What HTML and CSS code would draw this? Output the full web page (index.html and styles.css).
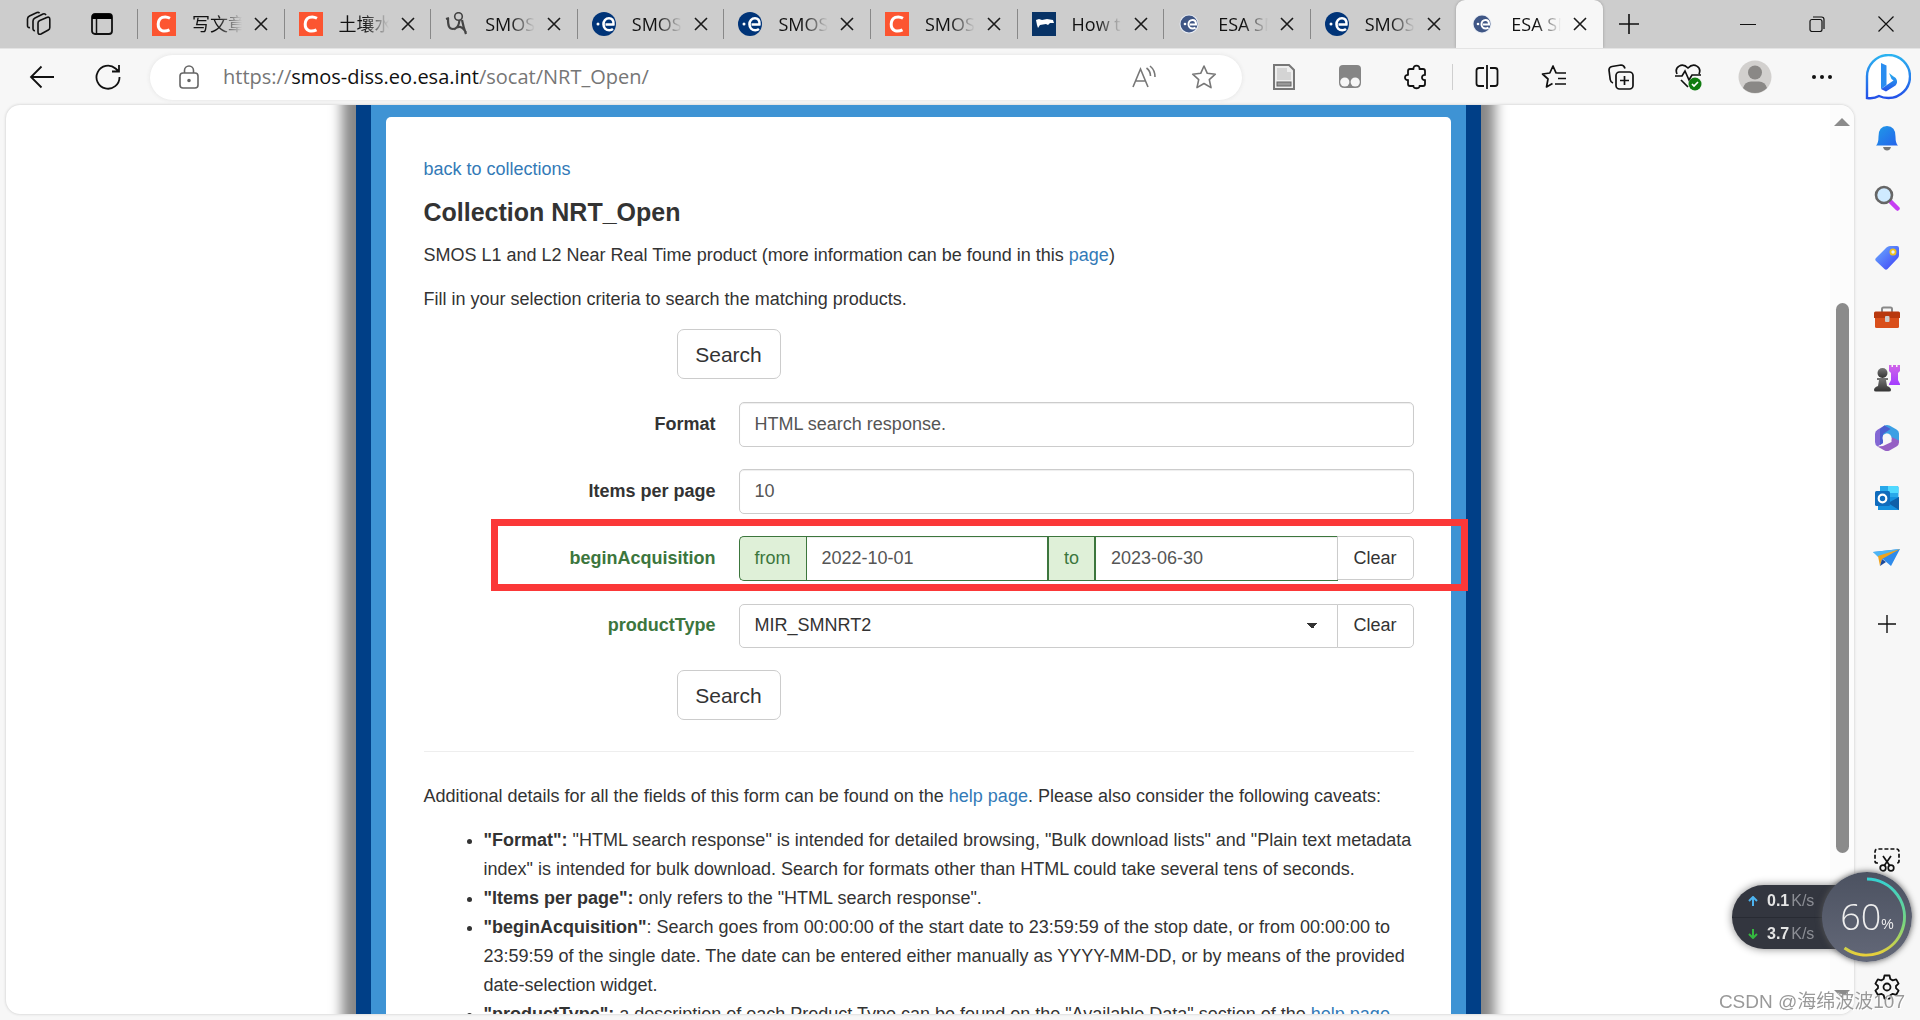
FILE: index.html
```html
<!DOCTYPE html>
<html lang="en">
<head>
<meta charset="utf-8">
<title>ESA SMOS Online Dissemination</title>
<link rel="stylesheet" href="styles.css">
</head>
<body>
<svg class="defs" width="0" height="0" aria-hidden="true">
  <defs>
    <linearGradient id="gBlue" x1="0" y1="0" x2="1" y2="1"><stop offset="0" stop-color="#1f9be8"/><stop offset="1" stop-color="#2563eb"/></linearGradient>
    <linearGradient id="gTag" x1="0" y1="0" x2="1" y2="1"><stop offset="0" stop-color="#6cb0ff"/><stop offset="1" stop-color="#3d3df5"/></linearGradient>
    <linearGradient id="gBing" x1="0" y1="0" x2="0" y2="1"><stop offset="0" stop-color="#2bb3f0"/><stop offset="1" stop-color="#2350e8"/></linearGradient>
    <linearGradient id="gRook" x1="0" y1="0" x2="0" y2="1"><stop offset="0" stop-color="#d065e8"/><stop offset="1" stop-color="#a33cff"/></linearGradient>
    <linearGradient id="gPawn" x1="0" y1="0" x2="0" y2="1"><stop offset="0" stop-color="#777"/><stop offset="1" stop-color="#333"/></linearGradient>
    <linearGradient id="gArc" x1="0" y1="0" x2="0" y2="1"><stop offset="0" stop-color="#35d0d0"/><stop offset="0.6" stop-color="#7cd67c"/><stop offset="1" stop-color="#e8cf3a"/></linearGradient>
    <symbol id="close" viewBox="0 0 14 14"><path d="M1 1l12 12M13 1L1 13" fill="none" stroke="#1a1a1a" stroke-width="1.6"/></symbol>
    <symbol id="csdn" viewBox="0 0 24 24"><path d="M0 0h24v24H0z" fill="#fc5531"/><path d="M18 6.200C13 3.500 6.500 5 6.200 12c-.2 7 6 8.500 11.300 5.800" fill="none" stroke="#fff" stroke-width="3"/></symbol>
    <symbol id="esa" viewBox="0 0 24 24"><circle cx="12" cy="12" r="12" fill="#003478"/><circle cx="6" cy="12" r="1.500" fill="#fff"/><path d="M22.500 12.500H13.500M21.500 12.500C22 8 19.500 6.200 17 6.200c-3.400 0-5.500 2.800-5.500 6 0 3.500 2.500 6 5.800 6 1.400 0 2.700-.4 3.700-1.200" fill="none" stroke="#fff" stroke-width="2.600"/></symbol>
    <symbol id="esaSmall" viewBox="0 0 24 24"><circle cx="11" cy="12" r="9.500" fill="#e9edf4"/><circle cx="11" cy="12" r="8.500" fill="#3f5685"/><circle cx="7" cy="12" r="1.300" fill="#fff"/><path d="M19 12.500H12M18 12c0-3-1.500-4-3.500-4-2.400 0-4 2-4 4.200 0 2.500 1.800 4.300 4.200 4.300 1 0 2-.3 2.800-.9" fill="none" stroke="#fff" stroke-width="2"/></symbol>
  </defs>
</svg>

<header class="tabbar">
  <div class="tab-tools">
    <button class="icon-btn" aria-label="Workspaces"><svg width="26" height="26" viewBox="0 0 26 26" fill="none" stroke="#111" stroke-width="1.600" stroke-linejoin="round"><path d="M12 12q0-1.800 1.800-2.600l7-3q3-1 3 2v8q0 1.800-1.500 2.600l-7.300 4q-3 1-3-2z"/><path d="M9 19.500q-2 .5-2-2V10q0-2 2-3l8-4q2-.8 3 1"/><path d="M4 16.500q-2.500.5-2.500-2V8q0-2 2-3L11 1.500q2-.6 2.500.8"/></svg></button>
    <button class="icon-btn" aria-label="Tab actions"><svg width="22" height="22" viewBox="0 0 22 22"><rect x="1" y="1" width="20" height="20" rx="3" fill="none" stroke="#111" stroke-width="1.800"/><path d="M1 3q0-2 3-2h14q3 0 3 2v3H1z" fill="#000"/><path d="M5.500 6v15" stroke="#111" stroke-width="1.500"/></svg></button>
  </div>
  <nav class="tabs" aria-label="Tabs">
    <div class="tab"><svg class="fav"><use href="#csdn"/></svg><span class="tab-title">写文章</span><button class="tab-close" aria-label="Close tab"><svg width="14" height="14"><use href="#close"/></svg></button></div>
    <div class="tab"><svg class="fav"><use href="#csdn"/></svg><span class="tab-title">土壤水</span><button class="tab-close" aria-label="Close tab"><svg width="14" height="14"><use href="#close"/></svg></button></div>
    <div class="tab"><svg class="fav" viewBox="0 0 24 24" fill="none" stroke="#444"><circle cx="13.500" cy="4.500" r="3.800" stroke-width="1.600"/><path d="M3 7c0 7 1 10 5 10 4 0 6-4 6.500-9M17 8c1 5 2 9 4 14M9 17.500c4-4 8-4 12 3" stroke-width="2.200"/><path d="M1 7l3-1" stroke-width="2"/></svg><span class="tab-title">SMOS</span><button class="tab-close" aria-label="Close tab"><svg width="14" height="14"><use href="#close"/></svg></button></div>
    <div class="tab"><svg class="fav"><use href="#esa"/></svg><span class="tab-title">SMOS</span><button class="tab-close" aria-label="Close tab"><svg width="14" height="14"><use href="#close"/></svg></button></div>
    <div class="tab"><svg class="fav"><use href="#esa"/></svg><span class="tab-title">SMOS</span><button class="tab-close" aria-label="Close tab"><svg width="14" height="14"><use href="#close"/></svg></button></div>
    <div class="tab"><svg class="fav"><use href="#csdn"/></svg><span class="tab-title">SMOS</span><button class="tab-close" aria-label="Close tab"><svg width="14" height="14"><use href="#close"/></svg></button></div>
    <div class="tab"><svg class="fav" viewBox="0 0 24 24"><path d="M0 0h24v24H0z" fill="#083366"/><path d="M4 8l3-1 3 1 5-1 6 1 1 3-4 0-2 2-2-1-6 1-2 3-1-3z" fill="#fff"/></svg><span class="tab-title">How t</span><button class="tab-close" aria-label="Close tab"><svg width="14" height="14"><use href="#close"/></svg></button></div>
    <div class="tab"><svg class="fav"><use href="#esaSmall"/></svg><span class="tab-title">ESA SM</span><button class="tab-close" aria-label="Close tab"><svg width="14" height="14"><use href="#close"/></svg></button></div>
    <div class="tab"><svg class="fav"><use href="#esa"/></svg><span class="tab-title">SMOS</span><button class="tab-close" aria-label="Close tab"><svg width="14" height="14"><use href="#close"/></svg></button></div>
    <div class="tab active"><svg class="fav"><use href="#esaSmall"/></svg><span class="tab-title">ESA SM</span><button class="tab-close" aria-label="Close tab"><svg width="14" height="14"><use href="#close"/></svg></button></div>
    <button class="icon-btn new-tab" aria-label="New tab"><svg width="22" height="22" viewBox="0 0 22 22"><path d="M11 1v20M1 11h20" stroke="#111" stroke-width="1.600"/></svg></button>
  </nav>
  <div class="window-buttons">
    <button class="icon-btn" aria-label="Minimize"><svg width="16" height="16" viewBox="0 0 16 16"><path d="M0 8.500h16" stroke="#111"/></svg></button>
    <button class="icon-btn" aria-label="Restore"><svg width="16" height="16" viewBox="0 0 16 16" fill="none" stroke="#111" stroke-width="1.200"><rect x="1" y="3.500" width="12" height="12" rx="2"/><path d="M4 1h8.500Q15 1 15 3.500V13"/></svg></button>
    <button class="icon-btn" aria-label="Close window"><svg width="16" height="16" viewBox="0 0 16 16"><path d="M.5.500l15 15M15.500.500l-15 15" stroke="#111" stroke-width="1.200"/></svg></button>
  </div>
</header>

<div class="toolbar">
  <div class="nav-buttons">
    <button class="icon-btn" aria-label="Back"><svg width="26" height="24" viewBox="0 0 26 24" fill="none" stroke="#111" stroke-width="1.800"><path d="M12.500 1.500L2 12l10.500 10.500M2 12h23"/></svg></button>
    <button class="icon-btn" aria-label="Refresh"><svg width="26" height="26" viewBox="0 0 26 26" fill="none" stroke="#111" stroke-width="1.800"><path d="M24.500 13A11.500 11.500 0 1 1 20.500 4.500L23.500 7M24 1v6.500h-7"/></svg></button>
  </div>
  <div class="address">
    <svg width="20" height="24" viewBox="0 0 20 24" fill="none" stroke="#666" stroke-width="1.600"><rect x="1" y="8" width="18" height="15" rx="3"/><path d="M5.500 8V5.500a4.500 4.500 0 0 1 9 0V8"/><circle cx="10" cy="15.500" r="1" fill="#555"/></svg>
    <span class="url">https://<span class="host">smos-diss.eo.esa.int</span>/socat/NRT_Open/</span>
    <button class="icon-btn addr-btn" aria-label="Read aloud"><svg width="24" height="24" viewBox="0 0 24 24" fill="none" stroke="#777" stroke-width="1.600"><path d="M1 22L8.500 4 16 22M4 16h9.500M14.500 3q4 3 4 8M18 1q5 4 5 11"/></svg></button>
    <button class="icon-btn addr-btn" aria-label="Add to favorites"><svg width="26" height="26" viewBox="0 0 26 26" fill="none" stroke="#777" stroke-width="1.600" stroke-linejoin="round"><path d="M13 2l3.300 7.300 8 .9-6 5.400 1.700 8L13 19.500 6 23.600l1.700-8-6-5.400 8-.9z"/></svg></button>
  </div>
  <div class="extensions">
    <button class="icon-btn" aria-label="Page extension"><svg width="22" height="26" viewBox="0 0 22 26"><path d="M1 1h15l5 5v19H1z" fill="#eee" stroke="#777" stroke-width="2"/><path d="M4 4h10v4h4v8H4z" fill="#d4d4d4"/><rect x="4" y="18" width="14" height="4" fill="#999" stroke="#666"/></svg></button>
    <button class="icon-btn" aria-label="Script manager"><svg width="24" height="24" viewBox="0 0 24 24"><path d="M5 0h14q4 0 4 4v14q0 5-5.500 5h-11Q1 23 1 18V4q0-4 4-4z" fill="#858585"/><circle cx="6.800" cy="17" r="4.600" fill="#f7f7f7"/><circle cx="17.200" cy="17" r="4.600" fill="#f7f7f7"/></svg></button>
    <button class="icon-btn" aria-label="Extensions"><svg width="24" height="26" viewBox="0 0 24 26" fill="none" stroke="#111" stroke-width="1.800" stroke-linejoin="round"><path d="M6 5h3.500C9 .500 16 .500 15.500 5H19q2 0 2 2v4c-4-.5-4 5.500 0 5v4q0 2-2 2h-3.500c.5 3-6.500 3-6 0H6q-2 0-2-2v-4c-4 .5-4-5.500 0-5V7q0-2 2-2z"/></svg></button>
  </div>
  <div class="browser-tools">
    <button class="icon-btn" aria-label="Split screen"><svg width="24" height="24" viewBox="0 0 24 24" fill="none" stroke="#111" stroke-width="1.800"><path d="M9 3H4Q1.500 3 1.500 5.500v13Q1.500 21 4 21h5M15 3h5q2.500 0 2.500 2.500v13Q22.500 21 20 21h-5M12 0v24"/></svg></button>
    <button class="icon-btn" aria-label="Favorites"><svg width="26" height="26" viewBox="0 0 26 26" fill="none" stroke="#111" stroke-width="1.700" stroke-linejoin="round"><path d="M16 9l-1-.2L12 2 8.800 9l-7.300 1 5.500 5-1.500 8 6-3.500M16 9h9M17 14.500h8M14 20h11"/></svg></button>
    <button class="icon-btn" aria-label="Collections"><svg width="26" height="26" viewBox="0 0 26 26" fill="none" stroke="#111" stroke-width="1.700"><rect x="8" y="8" width="17" height="17" rx="3.500"/><path d="M16.500 12v9M12 16.500h9M5 19Q2.500 18 2.200 15.500L1 6Q1 3 4 2.500L13 1q3 0 4 3.500"/></svg></button>
    <button class="icon-btn" aria-label="Browser essentials"><svg width="28" height="28" viewBox="0 0 28 28" fill="none" stroke="#111" stroke-width="1.700"><path d="M3 11C0 4 8-1 14 5c6-6 14-1 11 6M1 13h7l3-5 4 9 3-5h9M7 17l7 7"/><circle cx="21" cy="21" r="6.500" fill="#107c10" stroke="none"/><path d="M18 21l2 2 4-4" stroke="#fff"/></svg></button>
    <button class="icon-btn" aria-label="Profile"><svg width="34" height="34" viewBox="0 0 34 34"><circle cx="17" cy="17" r="16.500" fill="#d2d0ce"/><circle cx="17" cy="12.500" r="7" fill="#8a8886"/><path d="M5 28q2-6.500 8-6.500h8q6 0 8 6.500-5 5-12 5T5 28z" fill="#8a8886"/></svg></button>
    <button class="icon-btn" aria-label="Settings and more"><svg width="22" height="6" viewBox="0 0 22 6" fill="#111"><circle cx="3" cy="3" r="2"/><circle cx="11" cy="3" r="2"/><circle cx="19" cy="3" r="2"/></svg></button>
  </div>
  <button class="icon-btn bing" aria-label="Bing chat"><svg width="46" height="46" viewBox="0 0 46 46"><path d="M2 44V23A21.500 21.500 0 1 1 23.500 44Q18 44 14 42 9 45 2 44z" fill="#fff" stroke="url(#gBing)" stroke-width="2.400"/><path d="M16 9l5.500 2.500V31L16 35z" fill="#2a8df0"/><path d="M16 35l5 2.500 9.500-6c3-3 1.500-7.500-2-9L24 19l2.500 6 2 1.500z" fill="url(#gBing)"/></svg></button>
</div>

<div class="workspace">
  <div class="viewport">
    <main class="page">
      <div class="frame">
        <div class="card">
          <p class="back"><a href="#collections">back to collections</a></p>
          <h1>Collection NRT_Open</h1>
          <p>SMOS L1 and L2 Near Real Time product (more information can be found in this <a href="#page">page</a>)</p>
          <p>Fill in your selection criteria to search the matching products.</p>
          <form class="criteria">
            <button type="button" class="btn btn-lg">Search</button>
            <div class="row">
              <label for="format">Format</label>
              <input class="control" id="format" type="text" value="HTML search response.">
            </div>
            <div class="row">
              <label for="items">Items per page</label>
              <input class="control" id="items" type="text" value="10">
            </div>
            <div class="row success">
              <label for="from">beginAcquisition</label>
              <div class="group">
                <span class="addon">from</span>
                <input class="control" id="from" type="text" value="2022-10-01">
                <label class="addon middle" for="to">to</label>
                <input class="control" id="to" type="text" value="2023-06-30">
                <button type="button" class="btn clear">Clear</button>
              </div>
              <div class="marker"></div>
            </div>
            <div class="row success">
              <label for="product">productType</label>
              <div class="group">
                <select class="picker" id="product"><option>MIR_SMNRT2</option></select>
                <button type="button" class="btn clear">Clear</button>
              </div>
            </div>
            <button type="button" class="btn btn-lg">Search</button>
          </form>
          <hr>
          <p>Additional details for all the fields of this form can be found on the <a href="#help">help page</a>. Please also consider the following caveats:</p>
          <ul>
            <li><b>"Format":</b> "HTML search response" is intended for detailed browsing, "Bulk download lists" and "Plain text metadata index" is intended for bulk download. Search for formats other than HTML could take several tens of seconds.</li>
            <li><b>"Items per page":</b> only refers to the "HTML search response".</li>
            <li><b>"beginAcquisition"</b>: Search goes from 00:00:00 of the start date to 23:59:59 of the stop date, or from 00:00:00 to 23:59:59 of the single date. The date can be entered either manually as YYYY-MM-DD, or by means of the provided date-selection widget.</li>
            <li><b>"productType":</b> a description of each Product Type can be found on the "Available Data" section of the <a href="#help">help page</a></li>
          </ul>
        </div>
      </div>
    </main>
    <div class="scrollbar">
      <svg width="16" height="8" viewBox="0 0 16 8"><path d="M8 0l8 8H0z" fill="#8b8b8b"/></svg>
      <div class="track"><div class="thumb"></div></div>
      <svg width="16" height="8" viewBox="0 0 16 8"><path d="M8 8l8-8H0z" fill="#8b8b8b"/></svg>
    </div>
  </div>
  <aside class="sidebar">
    <button class="icon-btn" aria-label="Notifications"><svg width="26" height="26" viewBox="0 0 26 26"><path d="M9 22h8q-1 3.500-4 3.500T9 22z" fill="#777"/><path d="M2 20.500q2.500-2 2.500-9Q4.500 1 13 1t8.500 10.500q0 7 2.500 9z" fill="url(#gBlue)"/></svg></button>
    <button class="icon-btn" aria-label="Search"><svg width="26" height="26" viewBox="0 0 26 26"><path d="M17 17l6.500 6.500" stroke="#c63df2" stroke-width="4.500" stroke-linecap="round"/><circle cx="10" cy="10" r="8" fill="#cfeaff" stroke="#666" stroke-width="2.600"/></svg></button>
    <button class="icon-btn" aria-label="Shopping"><svg width="26" height="26" viewBox="0 0 26 26"><path d="M12.500 2.500Q14 1 16 1h7q2 0 2 2v7q0 2-1.500 3.500L13.500 24q-1.500 1.500-3 0L2 16q-1.500-1.500 0-3z" fill="url(#gTag)"/><circle cx="19" cy="7" r="2.600" fill="#e8f0ff" stroke="#f2c21a" stroke-width="1.800"/></svg></button>
    <button class="icon-btn" aria-label="Tools"><svg width="28" height="26" viewBox="0 0 28 26"><path d="M9 7V4q0-1.500 1.500-1.500h7Q19 2.500 19 4v3" fill="none" stroke="#8a8a8a" stroke-width="2"/><rect x="2" y="11" width="24" height="12" rx="1.500" fill="#d94f1b"/><path d="M1 8q0-1.500 1.500-1.500h23Q27 6.500 27 8v5H1z" fill="#b8380e"/><rect x="12" y="11" width="4.500" height="6" rx="1" fill="#ccc"/></svg></button>
    <button class="icon-btn" aria-label="Games"><svg width="28" height="28" viewBox="0 0 28 28"><path d="M16 1h2.500v2H20V1h3v2h1.500V1H27v6l-2 2v7l2 4v1H16v-1l2-4V9l-2-2z" fill="url(#gRook)"/><circle cx="9.500" cy="9" r="5" fill="url(#gPawn)"/><path d="M4 14h11v2h-2l1 6q4 1.500 4 4 0 1.500-2 1.500H3Q1 27.500 1 26q0-2.500 4-4l1-6H4z" fill="url(#gPawn)"/></svg></button>
    <button class="icon-btn" aria-label="Microsoft 365"><svg width="26" height="28" viewBox="0 0 26 28"><path d="M10.500 1.600q2.500-1.400 5 0l7 4q2.500 1.400 2.500 4v9L17.500 14l-4.500-4.500L8 12z" fill="#3a9fe4"/><path d="M10.500 1.600L3.500 5.700Q1 7 1 10v8q0 3 2.500 4.400L9 19V9.500L16 5z" fill="#8468d4"/><path d="M9 19V10l7.500-5-6-3.400L6 5v16z" fill="#4a5fd0"/><path d="M3.500 22.400l7 4q2.500 1.400 5 0l7-4Q25 21 25 18.500v-2L17.500 13v5L9 22z" fill="#9560c4"/><circle cx="13" cy="14" r="4.500" fill="#f7f7f7"/></svg></button>
    <button class="icon-btn" aria-label="Outlook"><svg width="26" height="26" viewBox="0 0 26 26"><path d="M6 1h17q1.500 0 1.500 1.500V13H6z" fill="#28a8ea"/><path d="M14 1h9q1.500 0 1.500 1.500V8H14z" fill="#50d9ff"/><path d="M4 12h21v13H4z" fill="#1490df"/><path d="M25 12v13L14 18z" fill="#0f5fa8"/><rect x="1" y="6" width="15" height="15" rx="1.500" fill="#0f6cbd"/><circle cx="8.500" cy="13.500" r="3.800" fill="none" stroke="#fff" stroke-width="2.200"/></svg></button>
    <button class="icon-btn" aria-label="Drop"><svg width="28" height="22" viewBox="0 0 28 22"><path d="M0 5l27-3-9 17-7-6z" fill="#2f8bea"/><path d="M0 5l27-3L5 10z" fill="#4db5f5"/><path d="M27 2L5 9l2 10 2-7z" fill="#f0a31c"/><path d="M7 19l2-7 4 3z" fill="#1b4a9c"/></svg></button>
    <button class="icon-btn" aria-label="Customize"><svg width="18" height="18" viewBox="0 0 18 18"><path d="M9 0v18M0 9h18" stroke="#111" stroke-width="1.400"/></svg></button>
    <span class="grow"></span>
    <button class="icon-btn" aria-label="Screenshot"><svg width="26" height="24" viewBox="0 0 26 24" fill="none" stroke="#111" stroke-width="1.700"><path d="M4 15H3q-2 0-2-2V4q0-3 3-3h18q3 0 3 3v9q0 2-2 2h-1" stroke-dasharray="4 2"/><path d="M9 8l7 10M17 8l-7 10"/><circle cx="9" cy="20" r="2.800"/><circle cx="17" cy="20" r="2.800"/></svg></button>
    <button class="icon-btn settings" aria-label="Settings"><svg width="26" height="26" viewBox="0 0 26 26" fill="none" stroke="#111" stroke-width="1.800" stroke-linejoin="round"><path d="M10.500 1.500h5l.8 3.500 2.400 1.400 3.500-1 2.400 4.200-2.600 2.400v2.200l2.600 2.400-2.400 4.200-3.500-1-2.400 1.400-.8 3.300h-5l-.8-3.300-2.400-1.400-3.500 1-2.400-4.200L4 14.200V12L1.400 9.600l2.400-4.200 3.500 1L9.700 5z"/><circle cx="13" cy="13" r="3.500"/></svg></button>
  </aside>
</div>

<div class="monitor">
  <div class="speeds">
    <div class="speed"><svg width="10" height="10" viewBox="0 0 10 10" fill="none" stroke="#4db4f0" stroke-width="2"><path d="M5 10V1M1 5l4-4 4 4"/></svg><b>0.1</b><span>K/s</span></div>
    <div class="speed"><svg width="10" height="10" viewBox="0 0 10 10" fill="none" stroke="#35b840" stroke-width="2"><path d="M5 0v9M1 5l4 4 4-4"/></svg><b>3.7</b><span>K/s</span></div>
  </div>
  <div class="dial">
    <svg class="arc" viewBox="0 0 90 90" fill="none" stroke="url(#gArc)" stroke-width="3"><path d="M45 7a38 38 0 1 1-22.500 69"/></svg>
    <span class="percent">60</span><span class="unit">%</span>
  </div>
</div>
<div class="watermark">CSDN @海绵波波107</div>
</body>
</html>
```
FILE: styles.css
```css
* { box-sizing: border-box; }
body {
  margin: 0;
  height: 100vh;
  display: flex;
  flex-direction: column;
  overflow: hidden;
  background: #f7f7f7;
  color: #333;
  font: 18px/29px "Liberation Sans", Arial, "Noto Sans CJK SC", sans-serif;
}
.defs { position: absolute; }
button, input, select { font: inherit; color: inherit; }
.icon-btn {
  display: flex;
  align-items: center;
  justify-content: center;
  padding: 0;
  border: 0;
  background: none;
}
a { color: #337ab7; text-decoration: none; }

/* tab strip */
.tabbar {
  display: flex;
  flex: none;
  height: 48px;
  background: #cdcdcd;
  font: 18px/24px "Open Sans", "Noto Sans CJK SC", sans-serif;
  color: #111;
}
.tab-tools { display: flex; flex: none; width: 137px; padding-left: 7px; }
.tab-tools .icon-btn { width: 63px; }
.tabs { display: flex; flex: 1; min-width: 0; max-width: 1518px; }
.tab {
  display: flex;
  align-items: center;
  flex: 1 1 0;
  min-width: 0;
  padding-left: 15px;
  background: linear-gradient(#888, #888) left center / 1px 30px no-repeat;
}
.tab.active { background: #f7f7f7; border-radius: 9px 9px 0 0; box-shadow: 0 0 3px #999; clip-path: inset(0 -4px 0 -4px); }
.fav { flex: none; width: 24px; height: 24px; }
.tab-title {
  flex: none;
  width: 50px;
  margin-left: 16px;
  overflow: hidden;
  white-space: nowrap;
  -webkit-mask-image: linear-gradient(90deg, #000 50%, transparent);
  mask-image: linear-gradient(90deg, #000 50%, transparent);
}
.tab-close { display: flex; padding: 0; margin-left: 12px; border: 0; background: none; }
.new-tab { flex: none; width: 52px; }
.window-buttons { display: flex; flex: none; margin-left: auto; }
.window-buttons .icon-btn { width: 69px; }

/* toolbar */
.toolbar {
  display: flex;
  align-items: center;
  flex: none;
  height: 57px;
  border-top: 1px solid #e4e4e4;
}
.nav-buttons { display: flex; flex: none; width: 150px; padding-left: 9px; }
.nav-buttons .icon-btn { width: 66px; }
.address {
  display: flex;
  align-items: center;
  flex: 1;
  height: 45px;
  margin-right: 9px;
  padding: 0 8px 0 29px;
  border-radius: 23px;
  background: #fff;
  box-shadow: 0 0 4px #e2e2e2;
  font: 20px/26px "Open Sans", sans-serif;
}
.url { flex: 1; margin-left: 24px; color: #767676; white-space: nowrap; }
.host { color: #111; }
.addr-btn { width: 60px; }
.extensions, .browser-tools { display: flex; flex: none; }
.extensions .icon-btn { width: 66px; }
.extensions { padding-right: 3px; border-right: 1px solid #cfcfcf; }
.browser-tools .icon-btn { width: 67px; }
.bing { flex: none; width: 65px; }

/* page area and sidebar */
.workspace { display: flex; flex: 1; min-height: 0; }
.viewport {
  display: flex;
  flex: 1;
  min-width: 0;
  margin: 0 0 6px 6px;
  overflow: hidden;
  background: #fff;
  border-radius: 14px;
  box-shadow: 0 0 3px #c4c4c4;
}
.page { flex: 1; min-width: 0; overflow: hidden; }
.frame {
  max-width: 1125px;
  min-height: 100%;
  margin: 0 auto;
  padding: 12px 15px 15px;
  border: solid #003f87;
  border-width: 0 15px;
  background: #3e93d4;
  box-shadow: 0 0 12px 14px #888;
}
.card { padding: 38px 37px 30px 38px; border-radius: 5px; background: #fff; }
.card p { margin: 0 0 15px; }
.card .back { margin: 0; }
h1 { margin: 13px 0 14px; font-size: 25px; line-height: 30px; }
.criteria { display: flex; flex-direction: column; gap: 22px; padding-bottom: 1px; }
.row {
  position: relative;
  display: flex;
  align-items: center;
  gap: 23px;
  min-height: 45px;
}
.btn-lg + .row { margin-top: 1px; }
.row > label { flex: none; width: 292px; text-align: right; font-weight: bold; }
.success > label { color: #3c763d; }
.control {
  flex: 1;
  min-width: 0;
  width: 100%;
  height: 45px;
  padding: 0 15px;
  border: 1px solid #ccc;
  border-radius: 5px;
  background: #fff;
  box-shadow: inset 0 1px 1px #eee;
  color: #555;
}
.btn {
  border: 1px solid #ccc;
  border-radius: 5px;
  background: #fff;
  color: #333;
}
.btn-lg {
  align-self: flex-start;
  width: 104px;
  height: 50px;
  margin-left: 253px;
  padding: 0;
  border-radius: 7px;
  font-size: 21px;
}
.group { display: flex; flex: 1; min-width: 0; }
.success .control { border-color: #3c763d; border-radius: 0; }
.addon {
  flex: none;
  width: 67px;
  border: 1px solid #3c763d;
  border-right: 0;
  border-radius: 5px 0 0 5px;
  background: #dff0d8;
  color: #3c763d;
  line-height: 43px;
  text-align: center;
}
.middle { width: 47px; border-width: 1px; border-right: 1px solid #3c763d; border-radius: 0; }
.clear { flex: none; width: 77px; height: 44px; margin-left: -1px; padding: 0; border-radius: 0 5px 5px 0; }
.picker {
  flex: 1;
  min-width: 0;
  height: 44px;
  padding: 0 15px;
  border: 1px solid #ccc;
  border-radius: 5px 0 0 5px;
  appearance: none;
  background:
    conic-gradient(from -45deg at 50% 100%, #333 90deg, transparent 0) right 19px center / 12px 6px no-repeat,
    #fff;
  background:
    linear-gradient(to bottom left, #333 50%, transparent 50%) right 25px center / 6px 6px no-repeat,
    linear-gradient(to bottom right, #333 50%, transparent 50%) right 19px center / 6px 6px no-repeat,
    #fff;
}
.marker {
  position: absolute;
  inset: -17px -54px -10px 67px;
  border: 7px solid #fb3838;
  pointer-events: none;
}
hr { margin: 30px 0; border: 0; border-top: 1px solid #eee; }
ul { margin: 0; padding-left: 60px; }

/* scrollbar */
.scrollbar {
  display: flex;
  flex-direction: column;
  align-items: center;
  flex: none;
  width: 24px;
  padding: 13px 0 16px;
  background: #fcfcfc;
}
.track { flex: 1; width: 13px; padding: 177px 0 0; }
.thumb { height: 80%; border-radius: 7px; background: #8b8b8b; }

/* sidebar */
.sidebar {
  display: flex;
  flex-direction: column;
  flex: none;
  width: 66px;
  padding: 3px 0;
}
.sidebar .icon-btn { flex: none; height: 60px; }
.sidebar .icon-btn:nth-of-type(9) { height: 72px; }
.sidebar .settings { height: 60px; margin-top: 67px; }
.grow { flex: 1; }

/* network monitor widget */
.monitor {
  position: fixed;
  right: 8px;
  bottom: 58px;
  display: flex;
  align-items: center;
}
.speeds {
  width: 134px;
  height: 64px;
  margin-right: -44px;
  border-radius: 32px 0 0 32px;
  background: #33363f;
  box-shadow: 0 0 8px #888;
}
.speed {
  display: flex;
  align-items: center;
  gap: 5px;
  height: 32px;
  padding-left: 16px;
  line-height: 32px;
}
.speed + .speed { border-top: 1px solid #282b33; }
.speed b { margin-left: 4px; color: #e4e4e4; font-size: 16px; }
.speed span { color: #8b8d94; font-size: 16px; margin-left: -3px; }
.dial {
  position: relative;
  display: flex;
  align-items: center;
  justify-content: center;
  width: 90px;
  height: 90px;
  border-radius: 50%;
  background: linear-gradient(#4c5261, #636878);
  box-shadow: 0 0 6px #555;
  color: #eee;
}
.arc { position: absolute; inset: 0; }
.percent { font: 300 36px/44px "Open Sans", sans-serif; }
.unit { padding-top: 14px; font-size: 14px; }
.watermark {
  position: fixed;
  right: 15px;
  bottom: 4px;
  color: #999;
  font: 19px/28px "Liberation Sans", "Noto Sans CJK SC", sans-serif;
  text-shadow: 1px 1px 0 #fff;
  white-space: nowrap;
}
```
